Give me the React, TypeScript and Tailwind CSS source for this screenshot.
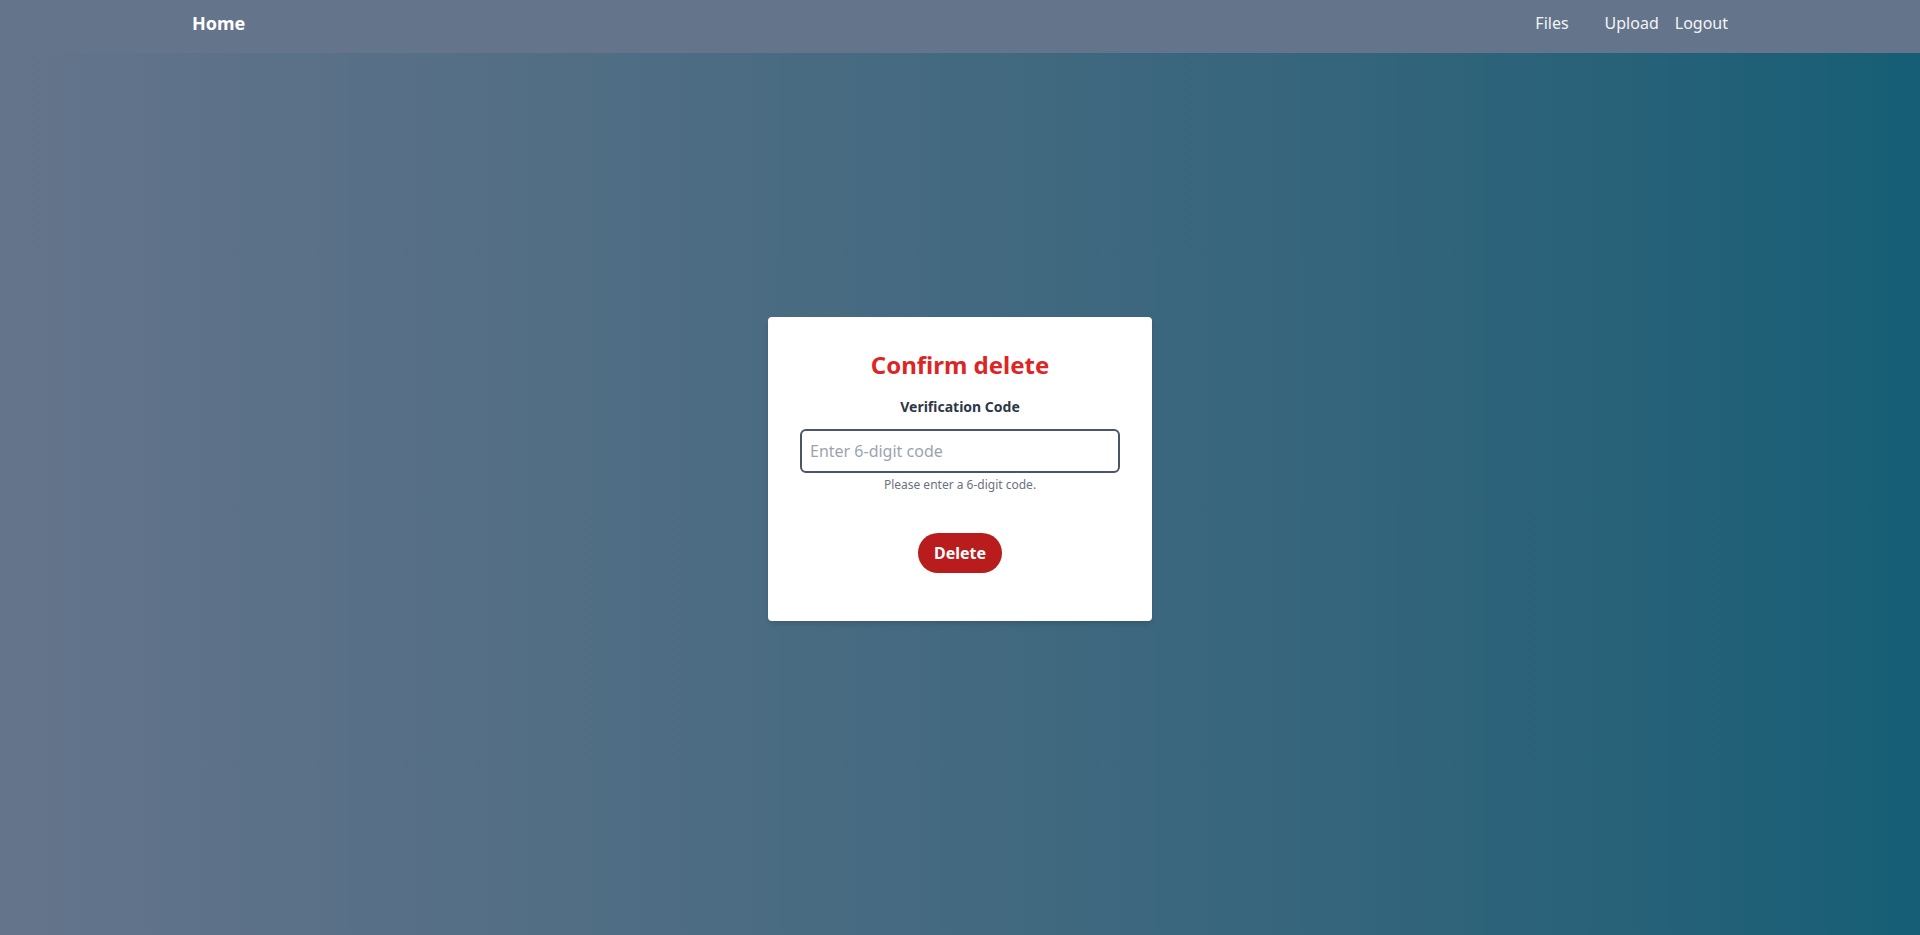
import { useState } from "react";

export default function App() {
  const [code, setCode] = useState("");

  return (
    <div className="min-h-screen bg-gradient-to-r from-[#64748b] to-[#155e75] font-['Noto_Sans',sans-serif]">
      {/* top bar */}
      <nav className="fixed inset-x-0 top-0 z-10 bg-[#64748b]">
        <div className="container mx-auto flex h-[53px] items-center justify-between pb-[7px]">
          <a href="#" className="text-lg font-bold text-white">
            Home
          </a>
          <div className="flex items-center gap-4 text-base text-gray-100">
            <a href="#" className="mr-5">Files</a>
            <a href="#">Upload</a>
            <a href="#">Logout</a>
          </div>
        </div>
      </nav>

      <main className="flex min-h-screen items-center justify-center pt-0.5">
        <div className="w-full max-w-sm rounded bg-white px-8 pt-8 pb-12 shadow-md">
          <h1 className="mb-4 text-center text-2xl font-bold text-[#dc2626]">Confirm delete</h1>
          <label htmlFor="code" className="mb-3 block text-center text-sm font-bold text-[#2d3748]">
            Verification Code
          </label>
          <input
            id="code"
            value={code}
            onChange={(e) => setCode(e.target.value)}
            placeholder="Enter 6-digit code"
            className="block h-11 w-full rounded-md border-2 border-[#4a5568] px-2 text-base text-gray-800 placeholder:text-[#9ca3af] focus:outline-none"
          />
          <p className="mt-1 text-center text-xs text-[#6b7280]">Please enter a 6-digit code.</p>
          <div className="mt-10 flex justify-center">
            <button className="h-10 rounded-full bg-[#b91c1c] px-4 text-base font-bold text-white">
              Delete
            </button>
          </div>
        </div>
      </main>
    </div>
  );
}
